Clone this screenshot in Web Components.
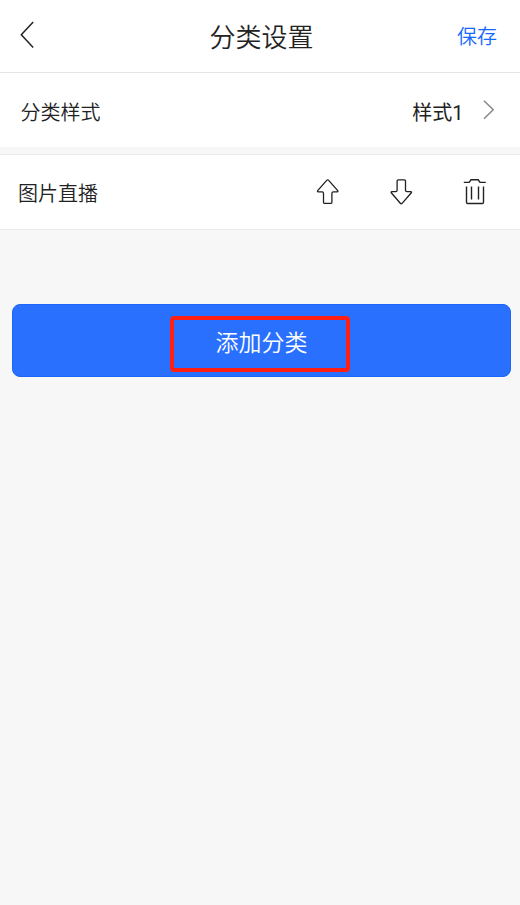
<!DOCTYPE html>
<html lang="zh-CN">
<head>
<meta charset="utf-8">
<meta name="viewport" content="width=device-width, initial-scale=1">
<title>分类设置</title>
<style>
body {
  margin: 0;
  background: #f7f7f7;
  color: #222;
  font-family: Roboto, "Noto Sans CJK SC", sans-serif;
  font-weight: 350;
}
</style>
</head>
<body>
<category-page>
  <nav-bar slot="header" heading="分类设置" action="保存"></nav-bar>
  <setting-row label="分类样式" value="样式1"></setting-row>
  <category-row>图片直播</category-row>
  <add-button>添加分类</add-button>
</category-page>

<script>
const icons = {
  back: `<svg width="16" height="30" viewBox="0 0 16 30"><path d="M13.2 2 L1.3 14.7 L13.2 27.4" stroke-width="1.5"/></svg>`,
  next: `<svg width="12" height="20" viewBox="0 0 12 20"><path d="M1 .8 L10.2 9.8 L1 18.8" stroke-width="1.5"/></svg>`,
  up: `<svg width="24" height="28" viewBox="-.7 0 24 28"><path d="M12 1.8 Q12.5 1.8 13 2.4 L22 12.6 Q22.6 13.8 21.5 13.8 H17.6 Q16.2 13.8 16.2 15.2 V24.2 Q16.2 25.4 15 25.4 H9 Q7.8 25.4 7.8 24.2 V15.2 Q7.8 13.8 6.4 13.8 H2.5 Q1.4 13.8 2 12.6 L11 2.4 Q11.5 1.8 12 1.8 Z"/></svg>`,
  down: `<svg width="24" height="28" viewBox="-.3 0 24 28"><path d="M12 25.8 Q12.5 25.8 13 25.2 L22 14.8 Q22.6 13.6 21.5 13.6 H17.6 Q16.2 13.6 16.2 12.2 V3 Q16.2 1.8 15 1.8 H9 Q7.8 1.8 7.8 3 V12.2 Q7.8 13.6 6.4 13.6 H2.5 Q1.4 13.6 2 14.8 L11 25.2 Q11.5 25.8 12 25.8 Z"/></svg>`,
  trash: `<svg width="24" height="28" viewBox="0 0 24 28"><path stroke-width="1.4" d="M.8 4.4 H6.2 L8 1.8 H15.2 L17 4.4 H22.8 M3.5 8.6 V24.3 Q3.5 25.5 4.7 25.5 H19.3 Q20.5 25.5 20.5 24.3 V8.6 M8.5 8.6 V21.6 M15.5 8.6 V21.6"/></svg>`,
};

class CategoryPage extends HTMLElement {
  constructor() {
    super();
    this.attachShadow({ mode: "open" });
    this.shadowRoot.innerHTML = `
<style>
:host { display: flex; flex-direction: column; min-height: 100vh; }
main { display: flex; flex-direction: column; gap: 7px; }
</style>
<slot name="header"></slot>
<main><slot></slot></main>`;
  }
}

class NavBar extends HTMLElement {
  constructor() {
    super();
    this.attachShadow({ mode: "open" });
    this.shadowRoot.innerHTML = `
<style>
:host {
  display: grid;
  grid-template-columns: 1fr auto 1fr;
  align-items: center;
  box-sizing: border-box;
  height: 73px;
  padding: 0 23px 2px 20px;
  background: #fff;
  border-bottom: 1px solid #e5e5e5;
}
svg { display: block; fill: none; stroke: #222; }
h1 { margin: 5px 0 0; padding-left: 6px; font-size: 26px; line-height: 38px; font-weight: inherit; }
.action { justify-self: end; padding-top: 3px; font-size: 20px; line-height: 30px; color: #1467ff; }
</style>
${icons.back}
<h1></h1>
<span class="action"></span>`;
    this.shadowRoot.querySelector("h1").textContent = this.getAttribute("heading");
    this.shadowRoot.querySelector(".action").textContent = this.getAttribute("action");
  }
}

class SettingRow extends HTMLElement {
  constructor() {
    super();
    this.attachShadow({ mode: "open" });
    this.shadowRoot.innerHTML = `
<style>
:host {
  display: flex;
  align-items: center;
  box-sizing: border-box;
  height: 74px;
  padding: 0 25px 0 20.5px;
  background: #fff;
  font-size: 20px;
  line-height: 30px;
}
.label { flex: 1; }
.label, .value { padding-top: 5px; }
.value { font-weight: 400; }
svg { margin-left: 19.5px; fill: none; stroke: #888; }
</style>
<span class="label"></span>
<span class="value"></span>
${icons.next}`;
    this.shadowRoot.querySelector(".label").textContent = this.getAttribute("label");
    this.shadowRoot.querySelector(".value").textContent = this.getAttribute("value");
  }
}

class CategoryRow extends HTMLElement {
  constructor() {
    super();
    this.attachShadow({ mode: "open" });
    this.shadowRoot.innerHTML = `
<style>
:host {
  display: flex;
  align-items: center;
  box-sizing: border-box;
  height: 76px;
  padding: 0 33px 0 18px;
  background: #fff;
  border: solid #ebebeb;
  border-width: 1px 0;
  font-size: 20px;
  line-height: 30px;
}
.name { flex: 1; padding-top: 4px; }
.tools { display: flex; gap: 50px; }
svg { display: block; fill: none; stroke: #222; stroke-width: 1.3; }
</style>
<span class="name"><slot></slot></span>
<div class="tools">${icons.up}${icons.down}${icons.trash}</div>`;
  }
}

class AddButton extends HTMLElement {
  constructor() {
    super();
    this.attachShadow({ mode: "open" });
    this.shadowRoot.innerHTML = `
<style>
:host { display: block; padding: 67px 9px 0 12px; }
button {
  display: flex;
  justify-content: center;
  align-items: center;
  box-sizing: border-box;
  width: 100%;
  height: 73px;
  padding: 6px 3px 0 0;
  border: 1px solid #1c66fb;
  border-radius: 8px;
  background: #2970ff;
  color: #fff;
  font: inherit;
  font-size: 23px;
}
.mark {
  box-sizing: border-box;
  width: 180px;
  height: 56px;
  border: 4px solid #ff1f13;
  border-radius: 4px;
  padding: 0 0 5px 3px;
  display: flex;
  justify-content: center;
  align-items: center;
}
</style>
<button type="button"><span class="mark"><slot></slot></span></button>`;
  }
}

window.customElements.define("category-page", CategoryPage);
window.customElements.define("nav-bar", NavBar);
window.customElements.define("setting-row", SettingRow);
window.customElements.define("category-row", CategoryRow);
window.customElements.define("add-button", AddButton);
</script>
</body>
</html>
